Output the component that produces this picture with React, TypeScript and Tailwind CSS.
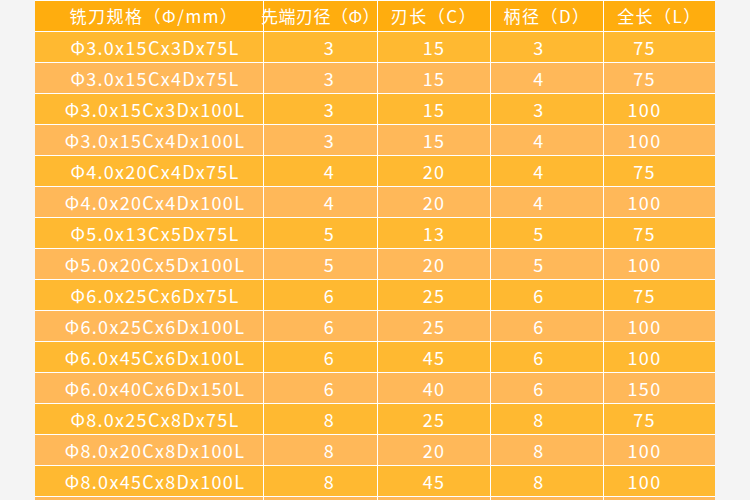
const rows: [string, number, number, number, number][] = [
  ["Φ3.0x15Cx3Dx75L", 3, 15, 3, 75],
  ["Φ3.0x15Cx4Dx75L", 3, 15, 4, 75],
  ["Φ3.0x15Cx3Dx100L", 3, 15, 3, 100],
  ["Φ3.0x15Cx4Dx100L", 3, 15, 4, 100],
  ["Φ4.0x20Cx4Dx75L", 4, 20, 4, 75],
  ["Φ4.0x20Cx4Dx100L", 4, 20, 4, 100],
  ["Φ5.0x13Cx5Dx75L", 5, 13, 5, 75],
  ["Φ5.0x20Cx5Dx100L", 5, 20, 5, 100],
  ["Φ6.0x25Cx6Dx75L", 6, 25, 6, 75],
  ["Φ6.0x25Cx6Dx100L", 6, 25, 6, 100],
  ["Φ6.0x45Cx6Dx100L", 6, 45, 6, 100],
  ["Φ6.0x40Cx6Dx150L", 6, 40, 6, 150],
  ["Φ8.0x25Cx8Dx75L", 8, 25, 8, 75],
  ["Φ8.0x20Cx8Dx100L", 8, 20, 8, 100],
  ["Φ8.0x45Cx8Dx100L", 8, 45, 8, 100],
  ["Φ10.0x25Cx10Dx75L", 10, 25, 10, 75],
]

const headers = [
  { t: "铣刀规格（Φ/mm）", c: "tracking-[1.5px] pl-[10px]" },
  { t: "先端刃径（Φ）", c: "tracking-[0.5px]" },
  { t: "刃长（C）", c: "tracking-[1.5px]" },
  { t: "柄径（D）", c: "tracking-[1.5px]" },
  { t: "全长（L）", c: "tracking-[1.5px]" },
]

// data text sits a little off the column centres in the original
const shift = ["pl-[12px]", "pl-[18px]", "pl-0", "pr-[16px]", "pr-[30px]"]

export default function App() {
  return (
    <div className="w-[750px] h-[500px] overflow-hidden bg-[#f4f4f4] pl-[35px] font-['Noto_Sans_CJK_SC','Noto_Sans',sans-serif] text-white">
      <div className="w-[680px] bg-white pt-px grid grid-cols-[228px_113px_112px_112px_111px] gap-px">
        {headers.map((h) => (
          <div
            key={h.t}
            className={`h-[30px] bg-[#ffad0e] flex items-center justify-center text-[17px] whitespace-nowrap ${h.c}`}
          >
            {h.t}
          </div>
        ))}
        {rows.map((r, i) =>
          r.map((cell, j) => (
            <div
              key={`${i}-${j}`}
              className={`h-[30px] flex items-center justify-center text-[18px] tracking-[1.3px] whitespace-nowrap ${shift[j]} ${
                i % 2 === 0 ? "bg-[#ffb931]" : "bg-[#ffb859]"
              }`}
            >
              {cell}
            </div>
          ))
        )}
      </div>
    </div>
  )
}
